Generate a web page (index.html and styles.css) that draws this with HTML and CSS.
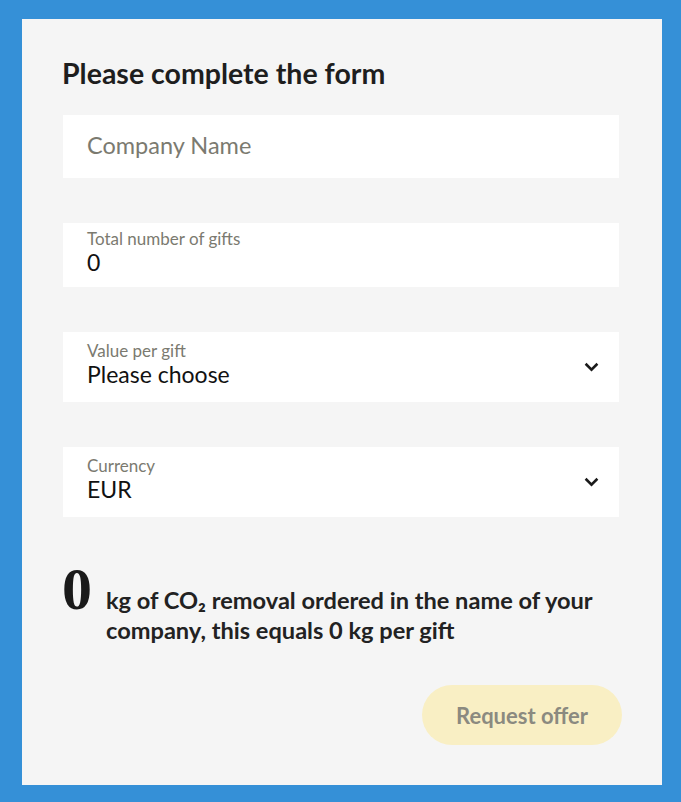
FILE: index.html
```html
<!DOCTYPE html>
<html lang="en">

<head>
    <meta charset="UTF-8">
    <meta name="viewport" content="width=device-width, initial-scale=1.0">
    <title>Gift Order Form</title>
    <link rel="stylesheet" href="styles.css">
</head>

<body>
    <div class="card">
        <h2 class="title">Please complete the form</h2>

        <div class="field plain">
            <span class="placeholder">Company Name</span>
        </div>

        <div class="field number">
            <div class="field-body">
                <span class="label">Total number of gifts</span>
                <span class="value">0</span>
            </div>
        </div>

        <div class="field select">
            <div class="field-body">
                <span class="label">Value per gift</span>
                <span class="value">Please choose</span>
            </div>
            <svg class="chevron" width="15" height="10" viewBox="0 0 15 10">
                <path d="M1.6 1.8 L7.5 7.6 L13.4 1.8" fill="none" stroke="#1a1a1a" stroke-width="2.6" />
            </svg>
        </div>

        <div class="field select">
            <div class="field-body">
                <span class="label">Currency</span>
                <span class="value">EUR</span>
            </div>
            <svg class="chevron" width="15" height="10" viewBox="0 0 15 10">
                <path d="M1.6 1.8 L7.5 7.6 L13.4 1.8" fill="none" stroke="#1a1a1a" stroke-width="2.6" />
            </svg>
        </div>

        <div class="summary">
            <span class="big-num">0</span>
            <p class="summary-text">kg of CO₂ removal ordered in the name of your company, this equals 0 kg per gift</p>
        </div>

        <div class="actions">
            <button class="offer-btn">Request offer</button>
        </div>
    </div>
</body>

</html>
```

FILE: styles.css
```css
body {
    margin: 0;
    background-color: #3590d7;
    font-family: Lato, "Open Sans", sans-serif;
}

.card {
    box-sizing: border-box;
    width: 640px;
    height: 766px;
    margin: 19px 0 0 22px;
    padding: 38px 40px 0 40px;
    background-color: #f5f5f5;
}

.title {
    margin: 0 0 26px 0;
    font-size: 28.5px;
    line-height: 32px;
    font-weight: 700;
    color: #1e1e1e;
}

.field {
    box-sizing: border-box;
    display: flex;
    align-items: center;
    width: 556px;
    margin-left: 1px;
    margin-bottom: 45px;
    padding: 0 20px 7px 24px;
    background-color: #ffffff;
}

.field.plain {
    height: 63px;
    padding-bottom: 3px;
}

.field.number {
    height: 64px;
}

.field.select {
    height: 70px;
}

.field-body {
    display: flex;
    flex-direction: column;
    flex: 1;
}

.placeholder {
    font-size: 23.5px;
    color: #7b7a70;
}

.label {
    font-size: 17px;
    line-height: 20px;
    color: #7b7a70;
}

.value {
    font-size: 23px;
    line-height: 26px;
    color: #111111;
}

.chevron {
    display: block;
    margin-top: 7px;
}

.summary {
    display: flex;
    align-items: baseline;
    gap: 14px;
}

.big-num {
    font-family: "Liberation Serif", serif;
    font-weight: 700;
    font-size: 60px;
    line-height: 54px;
    color: #1a1a1a;
}

.summary-text {
    margin: 0;
    max-width: 500px;
    font-size: 23.6px;
    line-height: 30px;
    font-weight: 700;
    color: #222222;
}

.actions {
    display: flex;
    justify-content: flex-end;
    margin-top: 40px;
}

.offer-btn {
    width: 200px;
    height: 60px;
    border: none;
    border-radius: 30px;
    background-color: #f9efc4;
    color: #8b8a80;
    font-family: Lato, "Open Sans", sans-serif;
    font-size: 22px;
    font-weight: 700;
}
```
